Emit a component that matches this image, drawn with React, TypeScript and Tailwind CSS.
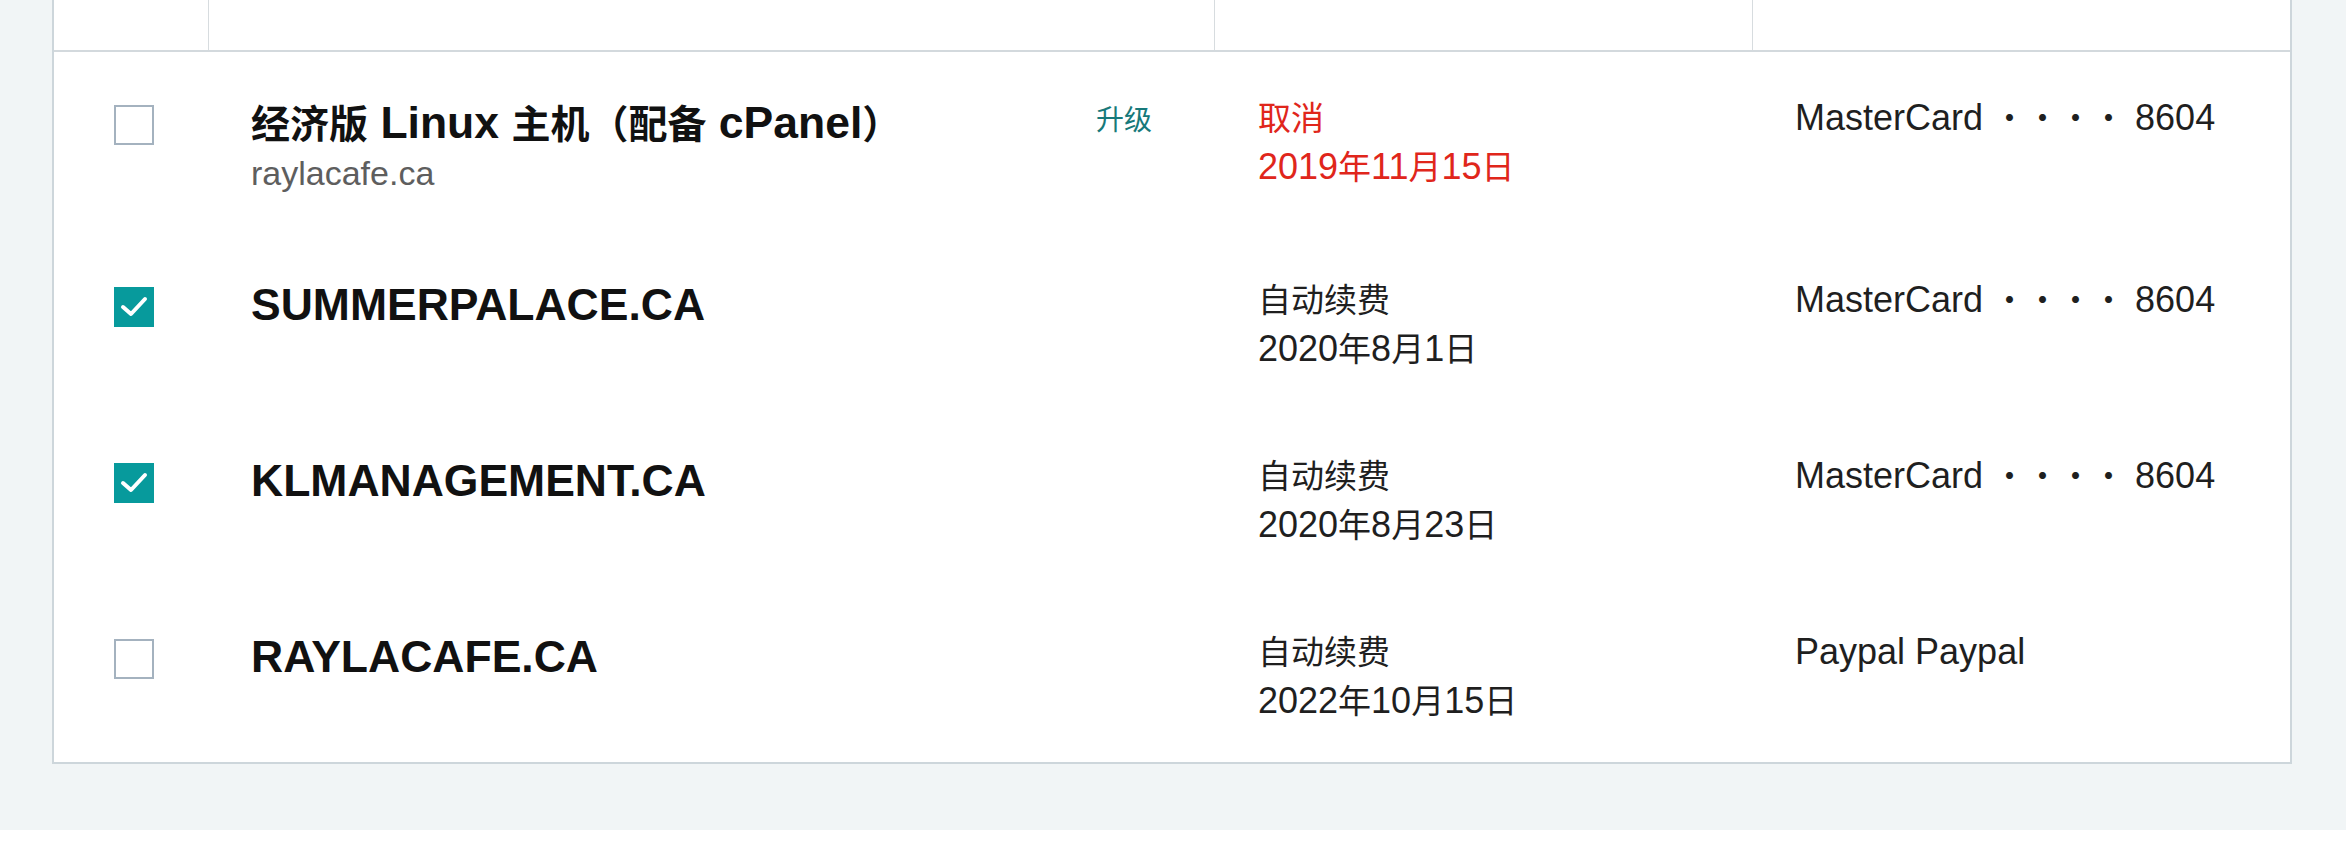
import { FC, Fragment } from "react";

// CJK runs get their own size: the Latin glyphs in the shot are wider than Liberation's at the same em
const CJK_RUN = /([\u3000-\u303f\u30fb\u4e00-\u9fff\uff00-\uffef]+)/;

const Mixed: FC<{ text: string; cjk: string }> = ({ text, cjk }) => (
  <>
    {text.split(CJK_RUN).map((part, i) =>
      i % 2 === 1 ? (
        <span key={i} className={cjk}>
          {part}
        </span>
      ) : (
        <Fragment key={i}>{part}</Fragment>
      )
    )}
  </>
);

type Row = {
  checked: boolean;
  title: string;
  domain?: string;
  upgrade?: boolean;
  status: string;
  date: string;
  cancelled?: boolean;
  payment: string;
};

const rows: Row[] = [
  {
    checked: false,
    title: "经济版 Linux 主机（配备 cPanel）",
    domain: "raylacafe.ca",
    upgrade: true,
    status: "取消",
    date: "2019年11月15日",
    cancelled: true,
    payment: "MasterCard ・・・・ 8604",
  },
  {
    checked: true,
    title: "SUMMERPALACE.CA",
    status: "自动续费",
    date: "2020年8月1日",
    payment: "MasterCard ・・・・ 8604",
  },
  {
    checked: true,
    title: "KLMANAGEMENT.CA",
    status: "自动续费",
    date: "2020年8月23日",
    payment: "MasterCard ・・・・ 8604",
  },
  {
    checked: false,
    title: "RAYLACAFE.CA",
    status: "自动续费",
    date: "2022年10月15日",
    payment: "Paypal Paypal",
  },
];

const Checkbox: FC<{ checked: boolean }> = ({ checked }) =>
  checked ? (
    <div className="h-10 w-10 border-2 border-[#079a9c] bg-[#079a9c]">
      <svg viewBox="0 0 36 36" className="h-9 w-9">
        <path
          d="M7 18 L15 25 L29 10"
          fill="none"
          stroke="#ffffff"
          strokeWidth="4"
          strokeLinecap="round"
          strokeLinejoin="round"
        />
      </svg>
    </div>
  ) : (
    <div className="h-10 w-10 border-2 border-[#a4b2bf] bg-white" />
  );

const COLS = "grid grid-cols-[155px_1006px_538px_1fr]";

export default function App() {
  return (
    <div className="bg-[#f1f5f6] pb-[66px] pl-[52px] pr-[54px] font-['Liberation_Sans','Noto_Sans_CJK_SC',sans-serif] text-[#1f1f1f]">
      <div className="border-x-2 border-b-2 border-[#cdd6db] bg-white">
        {/* header, its labels sit above the visible area */}
        <div className={`${COLS} h-[52px] border-b-2 border-[#d3d9dd]`}>
          <div className="border-r border-[#d7dcdf]" />
          <div className="border-r border-[#d7dcdf]" />
          <div className="border-r border-[#d7dcdf]" />
          <div />
        </div>

        {rows.map((row, index) => (
          <div key={index} className={`${COLS} pb-[37px] pt-[41px]`}>
            <div className="pl-[60px] pt-[12px]">
              <Checkbox checked={row.checked} />
            </div>

            <div className="flex items-start justify-between pl-[42px] pr-[63px]">
              <div>
                <div className="h-[56px] pt-[2px] text-[44.5px] font-bold leading-[56px] text-[#111111]">
                  <Mixed text={row.title} cjk="text-[39px] leading-none" />
                </div>
                {row.domain && (
                  <div className="h-[48px] text-[34px] leading-[48px] text-[#5e5e5e]">{row.domain}</div>
                )}
              </div>
              {row.upgrade && (
                <div className="text-[28px] leading-[56px] text-[#17797a]">升级</div>
              )}
            </div>

            <div
              className={`pl-[43px] text-[36px] leading-[49px] ${
                row.cancelled ? "text-[#e0261b]" : "text-[#1f1f1f]"
              }`}
            >
              <div className="h-[49px]">
                <Mixed text={row.status} cjk="text-[33px] leading-none" />
              </div>
              <div className="h-[49px]">
                <Mixed text={row.date} cjk="text-[33px] leading-none" />
              </div>
            </div>

            <div className="h-[49px] pl-[42px] text-[36px] leading-[49px]">
              <Mixed text={row.payment} cjk="text-[33px] leading-none" />
            </div>
          </div>
        ))}
      </div>
    </div>
  );
}
